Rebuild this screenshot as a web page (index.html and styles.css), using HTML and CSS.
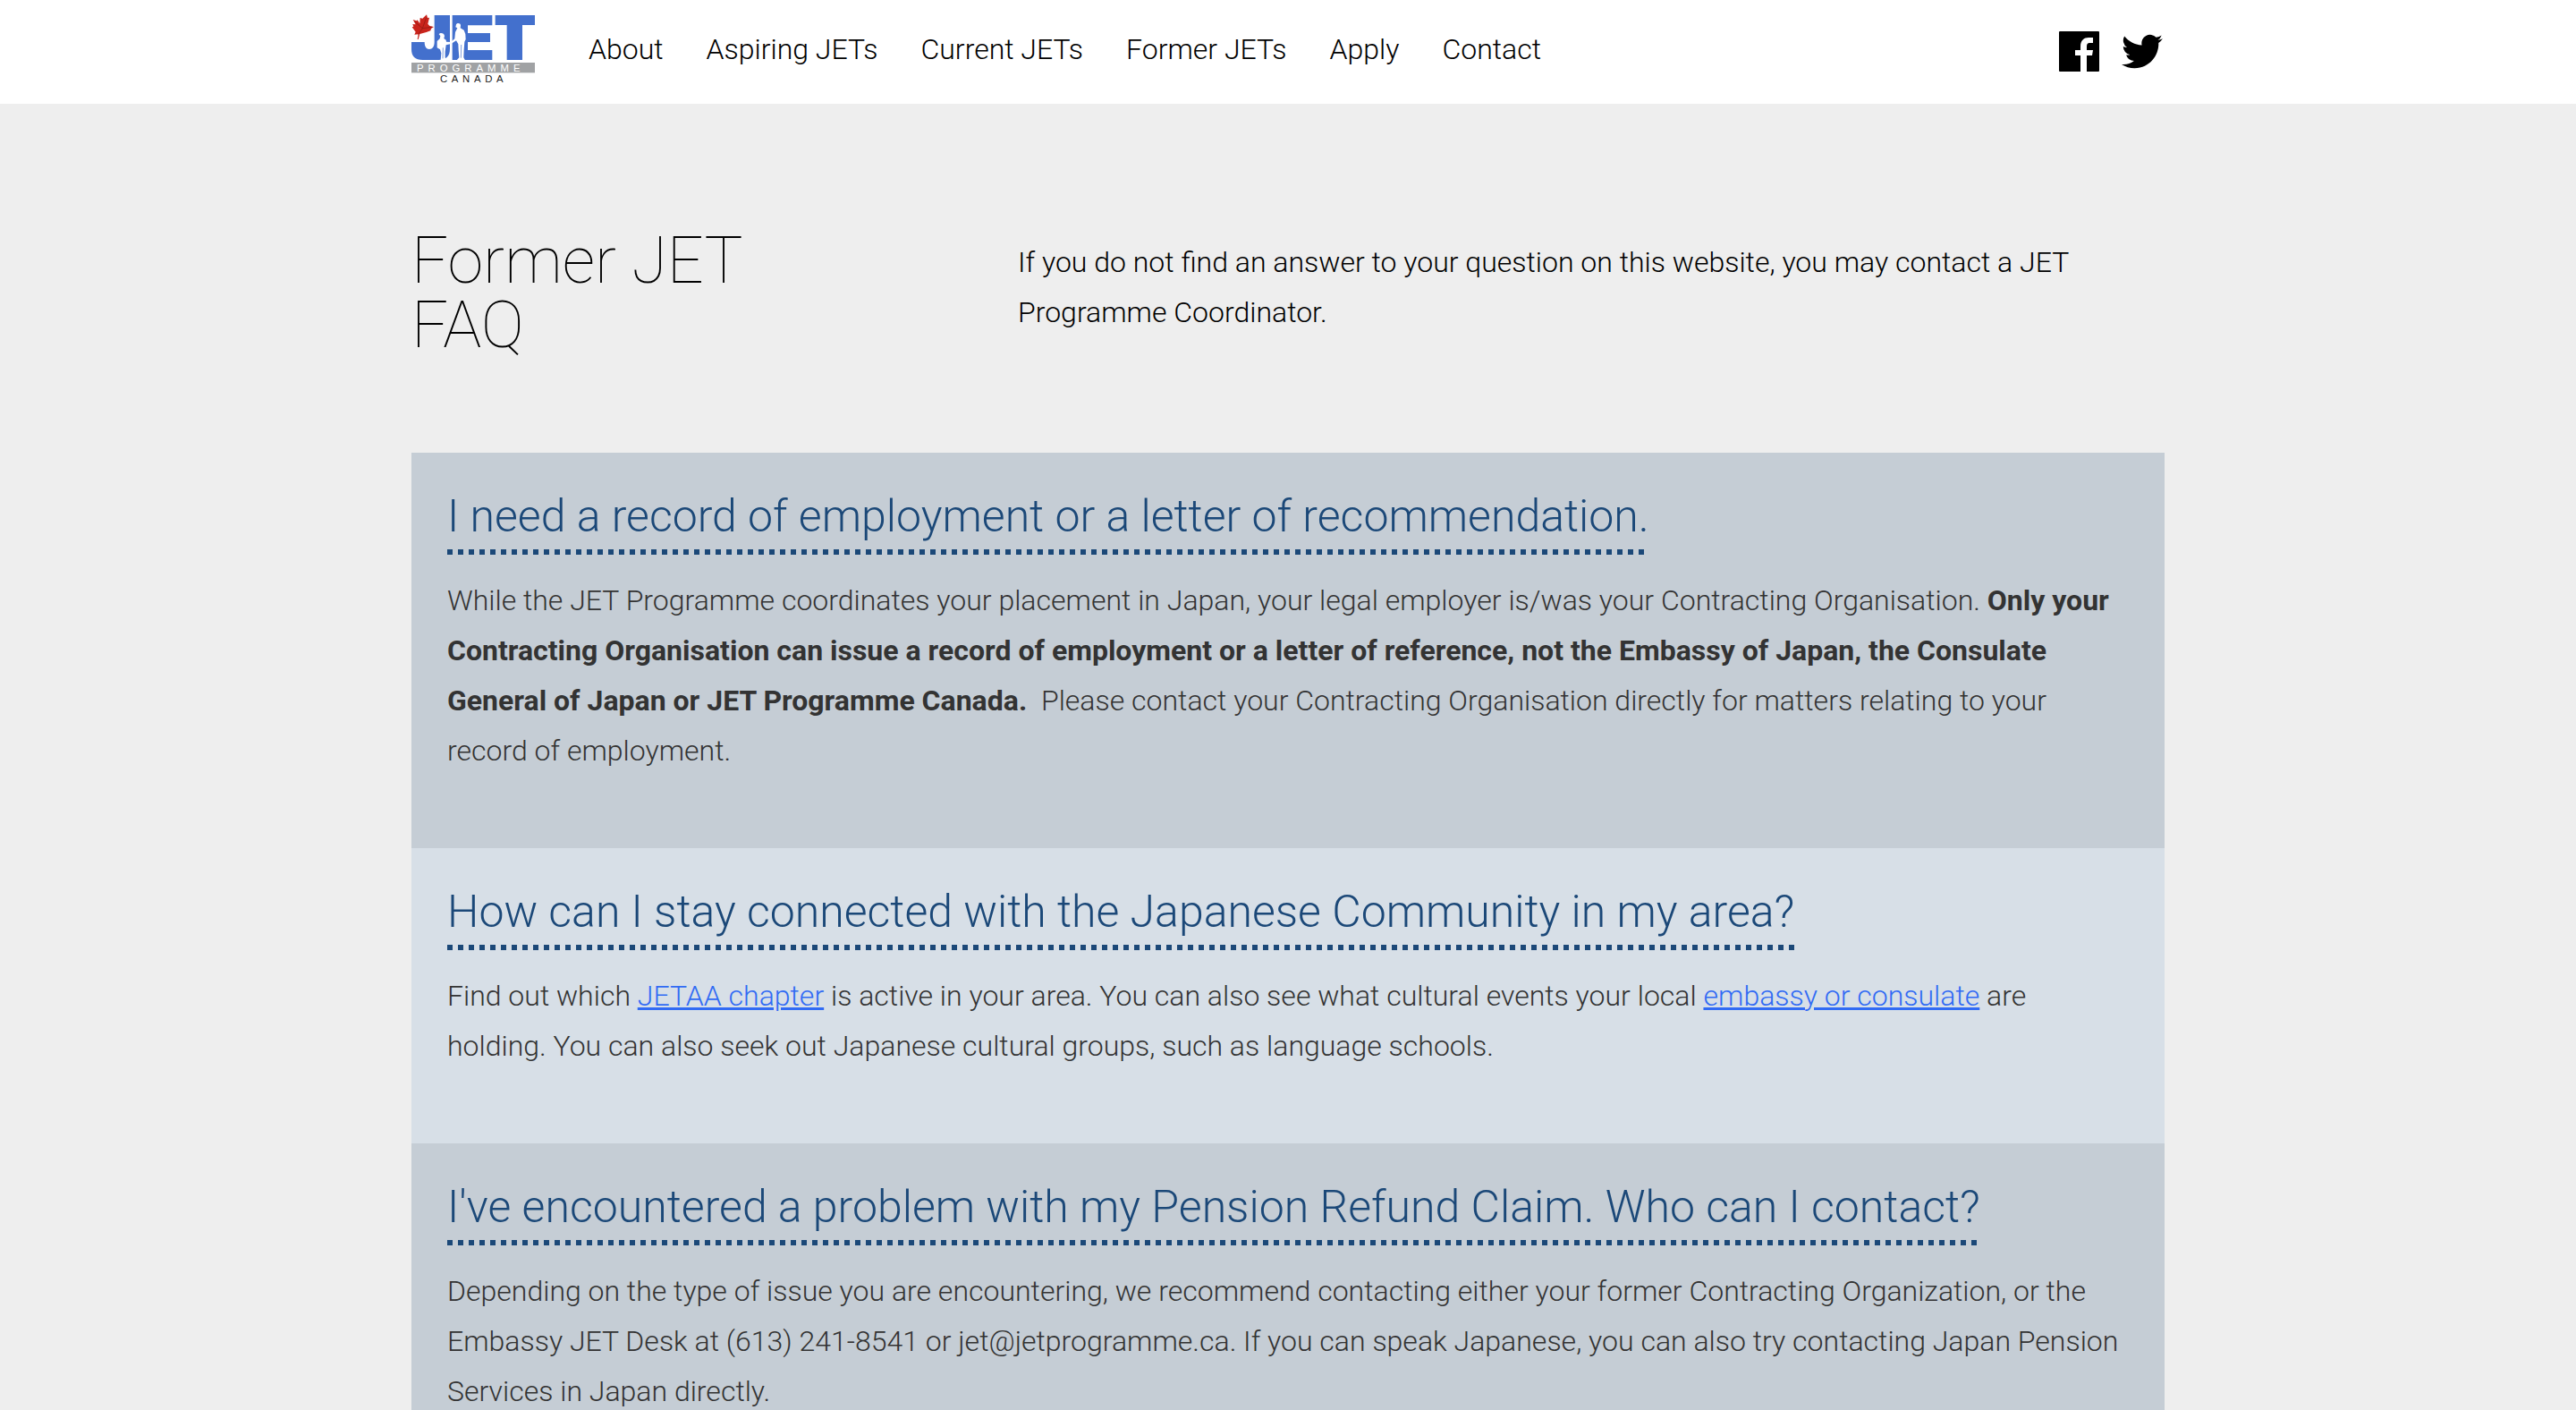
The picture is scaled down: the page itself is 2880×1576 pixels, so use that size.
FILE: index.html
```html
<!DOCTYPE html>
<html lang="en">
<head>
<meta charset="utf-8">
<meta name="viewport" content="width=device-width, initial-scale=1">
<title>Former JET FAQ</title>
<link rel="stylesheet" href="styles.css">
</head>
<body>
<header class="site-header">
  <div class="container header-row">
    <a class="logo" href="#" aria-label="JET Programme Canada">
      <svg viewBox="0 0 414 240" width="138" height="80" role="img" aria-hidden="true">
        <g fill="#4370cd">
          <path d="M77 3h52v112c0 28-14 38-38 38H38C12 153 0 141 0 117V93h44c0 16 6 24 16 24s17-8 17-24z"/>
          <path d="M137 3h134v34h-82v26h75v30h-75v27h82v33H137z"/>
          <path d="M281 3h133v33h-42v117h-52V36h-39z"/>
        </g>
        <path fill="#fff" d="M92 67C96 61 110 62 111 73L109 81L116 86L117 92L132 93L145 82L147 60L154 46L148 43L150 34C153 28 166 29 165 38L164 46L176 53L181 66L182 84L178 92L176 120L175 145L180 154H152L160 145L158 120L157 100L150 88L133 99L116 103L113 125L113 144L116 154H98L100 130L96 118L86 112V90L95 82L97 73Z"/>
        <path fill="none" stroke="#4370cd" stroke-width="2" d="M167 102l-1 44M106 112l-1 36"/>
        <path fill="#c9241c" d="M51 1L54 12L60 11L55 32L61 39L75 42L66 48L64 55L50 60L28 66L23 84L20 84L23 67L10 68L14 59L2 43L7 41L4 33L14 34L5 18L17 22L20 19L28 31L29 12L37 14Z"/>
        <path fill="none" stroke="#8a1812" stroke-width="2" d="M23 67l14-20 13-36M37 47L10 24M37 47l32-4"/>
        <rect y="162" width="414" height="34" fill="#a0a2a4"/>
        <text class="logo-band" x="18" y="191">PROGRAMME</text>
        <text class="logo-country" x="96" y="228">CANADA</text>
      </svg>
    </a>
    <nav class="main-nav" aria-label="Main">
      <a href="#">About</a>
      <a href="#">Aspiring JETs</a>
      <a href="#">Current JETs</a>
      <a href="#">Former JETs</a>
      <a href="#">Apply</a>
      <a href="#">Contact</a>
    </nav>
    <div class="social">
      <a href="#" aria-label="Facebook"><svg viewBox="0 0 45 45" width="45" height="45" aria-hidden="true"><rect width="45" height="45" rx="1"/><path fill="#fff" d="M24 45V27h-6v-6h6v-4c0-7 4-10 9-10h5v6h-4c-2 0-3 1-3 4v4h7l-1 6h-6v18z"/></svg></a>
      <a href="#" aria-label="Twitter"><svg viewBox="0 0 24 20" width="46" height="39" aria-hidden="true"><path d="M23.95 2.57a10 10 0 0 1-2.82.78 4.96 4.96 0 0 0 2.16-2.73c-.95.56-2 .96-3.13 1.19A4.92 4.92 0 0 0 11.78 6.3C7.69 6.1 4.07 4.1 1.64 1.12a4.9 4.9 0 0 0 1.52 6.58 4.9 4.9 0 0 1-2.23-.62v.06a4.92 4.92 0 0 0 3.95 4.83 5 5 0 0 1-2.21.08 4.94 4.94 0 0 0 4.6 3.42A9.87 9.87 0 0 1 0 17.51 14 14 0 0 0 7.55 19.72c9.05 0 14-7.5 14-13.99 0-.21 0-.42-.02-.63a9.94 9.94 0 0 0 2.42-2.53z"/></svg></a>
    </div>
  </div>
</header>
<main class="container">
  <section class="intro">
    <h1>Former JET FAQ</h1>
    <p>If you do not find an answer to your question on this website, you may contact a JET Programme Coordinator.</p>
  </section>
  <section class="faq">
    <article class="faq-item">
      <h2>I need a record of employment or a letter of recommendation.</h2>
      <p>While the JET Programme coordinates your placement in Japan, your legal employer is/was your Contracting Organisation. <strong>Only your Contracting Organisation can issue a record of employment or a letter of reference, not the Embassy of Japan, the Consulate General of Japan or JET Programme Canada.&nbsp;</strong> Please contact your Contracting Organisation directly for matters relating to your record of employment.</p>
    </article>
    <article class="faq-item">
      <h2>How can I stay connected with the Japanese Community in my area?</h2>
      <p>Find out which <a href="#">JETAA chapter</a> is active in your area. You can also see what cultural events your local <a href="#">embassy or consulate</a> are holding. You can also seek out Japanese cultural groups, such as language schools.</p>
    </article>
    <article class="faq-item">
      <h2>I've encountered a problem with my Pension Refund Claim. Who can I contact?</h2>
      <p>Depending on the type of issue you are encountering, we recommend contacting either your former Contracting Organization, or the Embassy JET Desk at (613) 241-8541 or jet@jetprogramme.ca. If you can speak Japanese, you can also try contacting Japan Pension Services in Japan directly.</p>
    </article>
  </section>
</main>
</body>
</html>
```
FILE: styles.css
```css
* {
  box-sizing: border-box;
}

body {
  margin: 0;
  background: #eee;
  color: #000;
  font-family: Roboto, "Liberation Sans", sans-serif;
  font-size: 32px;
  font-weight: 300;
  line-height: 56px;
}

h1,
h2,
p {
  margin: 0;
}

.container {
  max-width: 1960px;
  margin: 0 auto;
}

.site-header {
  background: #fff;
}

.header-row {
  display: flex;
  align-items: flex-start;
  padding: 16px 0 20px;
}

.logo {
  display: flex;
  margin-right: 60px;
}

.logo svg {
  overflow: visible;
}

.logo-band,
.logo-country {
  font-family: "Liberation Sans", sans-serif;
  font-weight: 400;
}

.logo-band {
  fill: #fff;
  font-size: 34px;
  letter-spacing: 15px;
}

.logo-country {
  fill: #222;
  font-size: 34px;
  letter-spacing: 14px;
}

.main-nav {
  display: flex;
  gap: 48px;
  padding-top: 11px;
}

.main-nav a {
  color: #000;
  text-decoration: none;
}

.social {
  display: flex;
  align-items: center;
  gap: 25px;
  margin-left: auto;
  padding: 19px 2px 0 0;
}

.social a {
  display: flex;
}

.intro {
  display: grid;
  grid-template-columns: 440px 1fr;
  column-gap: 238px;
  padding: 140px 0 106px;
}

.intro h1 {
  font-size: 72px;
  font-weight: 100;
  line-height: 72px;
}

.intro p {
  padding-top: 9px;
}

.faq-item {
  padding: 41px 40px 81px;
  background: #c5cdd5;
  color: #333;
}

.faq-item:nth-child(even) {
  background: #d7dfe7;
}

/* The underline is a row of square dots along the foot of the heading. */
.faq-item h2 {
  width: fit-content;
  margin-bottom: 23px;
  padding-bottom: 13px;
  background: repeating-linear-gradient(90deg, #1b4878 0 6px, transparent 6px 12px) bottom / 100% 6px no-repeat;
  color: #1b4878;
  font-size: 50px;
  font-weight: 300;
  line-height: 60px;
}

.faq-item strong {
  font-weight: 700;
}

.faq-item a {
  color: #316bf4;
}
```
